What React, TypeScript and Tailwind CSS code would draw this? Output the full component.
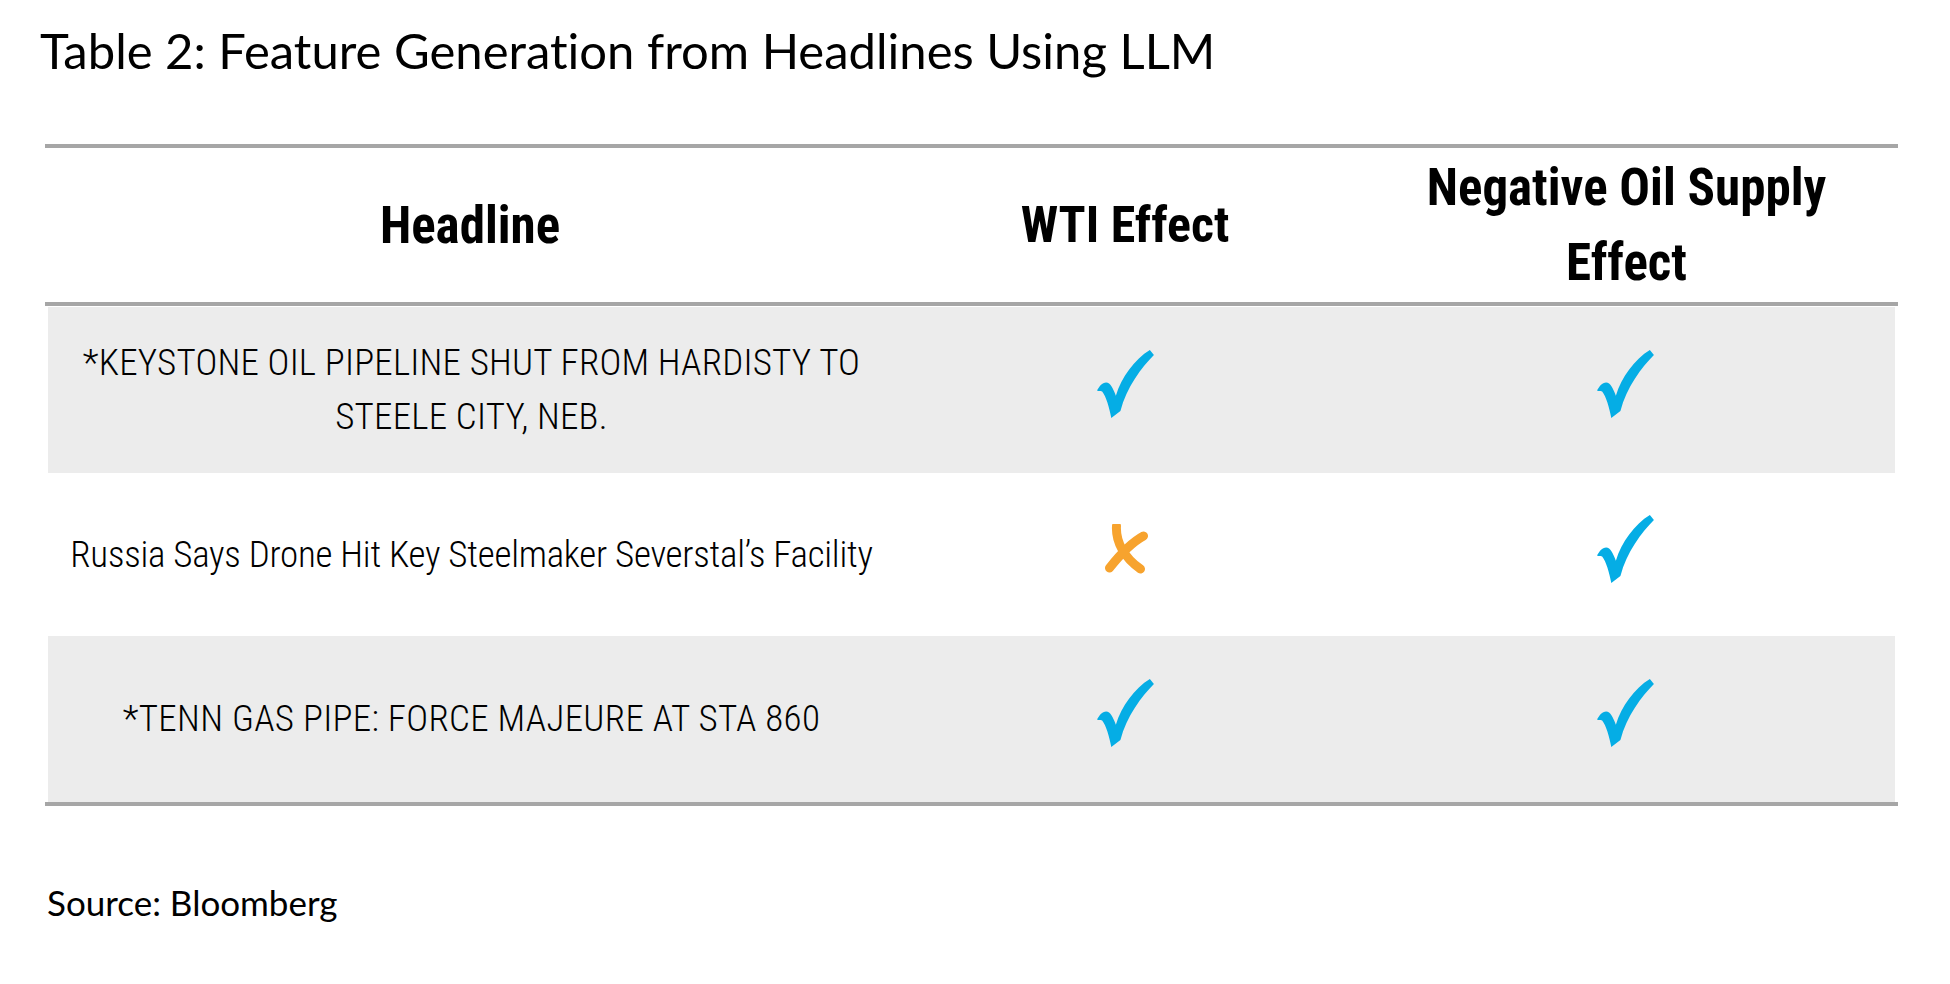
import React from "react";

const titleFont = { fontFamily: '"Lato", "Open Sans", sans-serif' };
const condFont = {
  fontFamily: '"Roboto Condensed", "DejaVu Sans Condensed", "Liberation Sans Narrow", "Arial Narrow", sans-serif',
};

function Check() {
  return (
    <svg width="57" height="68" viewBox="0 0 56 67" className="block">
      <path
        d="M0 40 C2 36 5 32 9 32 C13 32 16 38 18.5 45 C24 27 37 9 52 0 L56 5 C44 17 29 37 23 60 L14 67 C12 57 9 46 5 41 C3 40 1 41 0 40 Z"
        fill="#05ade5"
      />
    </svg>
  );
}

function Cross() {
  return (
    <svg width="46" height="50" viewBox="0 0 45 50" className="block">
      <path d="M14 2 C13 18 22 34 38 45" stroke="#f7a32e" strokeWidth="9" fill="none" strokeLinecap="round" />
      <path d="M41 12 C30 18 18 30 7 44" stroke="#f7a32e" strokeWidth="9" fill="none" strokeLinecap="round" />
    </svg>
  );
}

type Row = { headline: React.ReactNode; wti: boolean; supply: boolean; shaded: boolean; h: string; track: string };

const rows: Row[] = [
  {
    headline: (
      <>
        *KEYSTONE OIL PIPELINE SHUT FROM HARDISTY TO
        <br />
        STEELE CITY, NEB.
      </>
    ),
    wti: true,
    supply: true,
    shaded: true,
    h: "h-[166px]",
    track: "tracking-[0.2px]",
  },
  {
    headline: <>Russia Says Drone Hit Key Steelmaker Severstal’s Facility</>,
    wti: false,
    supply: true,
    shaded: false,
    h: "h-[163px]",
    track: "tracking-[-0.25px]",
  },
  {
    headline: <>*TENN GAS PIPE: FORCE MAJEURE AT STA 860</>,
    wti: true,
    supply: true,
    shaded: true,
    h: "h-[166px]",
    track: "tracking-[0.3px]",
  },
];

export default function App() {
  return (
    <div className="w-[1950px] h-[984px] bg-white text-black overflow-hidden">
      <h1
        className="pl-[40px] pt-[20px] text-[49px] leading-[60px] font-normal [font-variant-ligatures:none]"
        style={titleFont}
      >
        Table 2: Feature Generation from Headlines Using LLM
      </h1>

      <div className="ml-[45px] mt-[64px] w-[1853px]">
        <div
          className="border-t-4 border-b-4 border-[#a6a6a6] grid grid-cols-[850px_460px_543px] h-[162px] items-center text-center font-stretch-condensed"
          style={condFont}
        >
          <div className="text-[51px] font-bold leading-[75px]">Headline</div>
          <div className="text-[50px] font-bold leading-[75px]">WTI Effect</div>
          <div className="text-[51px] font-bold leading-[75px]">
            Negative Oil Supply
            <br />
            Effect
          </div>
        </div>

        <div className="pt-[1px] border-b-4 border-[#a6a6a6]">
          {rows.map((r, i) => (
            <div
              key={i}
              className={`mx-[3px] grid grid-cols-[847px_460px_540px] items-center ${r.h} ${r.shaded ? "bg-[#ececec]" : "bg-white"}`}
            >
              <div
                className={`text-center text-[37px] leading-[54px] font-light font-stretch-condensed whitespace-nowrap ${r.track}`}
                style={condFont}
              >
                {r.headline}
              </div>
              <div className="flex justify-center pb-[12px]">{r.wti ? <Check /> : <Cross />}</div>
              <div className="flex justify-center pb-[12px]">{r.supply ? <Check /> : <Cross />}</div>
            </div>
          ))}
        </div>
      </div>

      <div className="pl-[47px] pt-[76px] text-[35px] leading-[40px]" style={titleFont}>
        Source: Bloomberg
      </div>
    </div>
  );
}
